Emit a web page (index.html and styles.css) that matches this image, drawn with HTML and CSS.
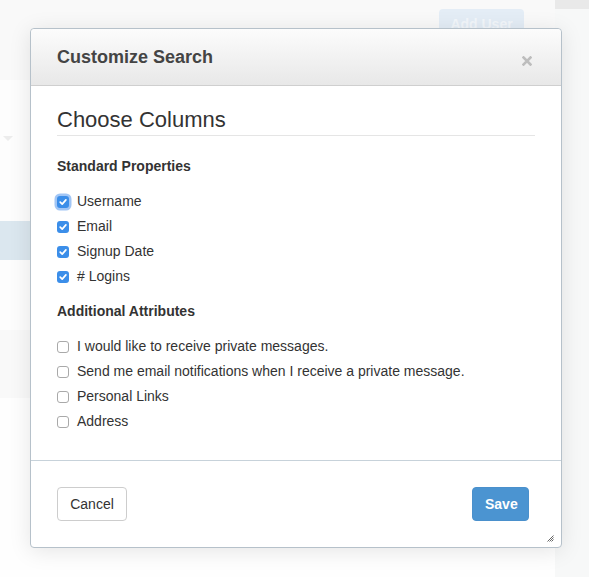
FILE: index.html
```html
<!DOCTYPE html>
<html>
<head>
<meta charset="utf-8">
<link rel="stylesheet" href="styles.css">
</head>
<body>
<div class="page">
  <div class="main">
    <div class="topbar"><span class="add-btn">Add User</span></div>
    <div class="area a1"><span class="caret"></span></div>
    <div class="area sel"></div>
    <div class="area a2"></div>
    <div class="area a3"></div>
    <div class="area a4"></div>
  </div>
  <div class="side"><div class="side-top"></div></div>
</div>

<div class="modal">
  <div class="modal-header">
    <h2 class="modal-title">Customize Search</h2>
    <svg class="close" width="10" height="10" viewBox="0 0 10 10"><path d="M1.5 1.5 L8.5 8.5 M8.5 1.5 L1.5 8.5" stroke="#bdbdbd" stroke-width="2.6" stroke-linecap="square"/></svg>
  </div>
  <div class="modal-body">
    <h3 class="section-title">Choose Columns</h3>
    <h4 class="group-title">Standard Properties</h4>
    <ul class="opts">
      <li class="opt"><span class="cb checked focus"><svg width="12" height="12" viewBox="0 0 12 12"><path d="M3.2 6.2 L5.2 8.1 L8.9 3.9" fill="none" stroke="#fff" stroke-width="1.7" stroke-linecap="round" stroke-linejoin="round"/></svg></span>Username</li>
      <li class="opt"><span class="cb checked"><svg width="12" height="12" viewBox="0 0 12 12"><path d="M3.2 6.2 L5.2 8.1 L8.9 3.9" fill="none" stroke="#fff" stroke-width="1.7" stroke-linecap="round" stroke-linejoin="round"/></svg></span>Email</li>
      <li class="opt"><span class="cb checked"><svg width="12" height="12" viewBox="0 0 12 12"><path d="M3.2 6.2 L5.2 8.1 L8.9 3.9" fill="none" stroke="#fff" stroke-width="1.7" stroke-linecap="round" stroke-linejoin="round"/></svg></span>Signup Date</li>
      <li class="opt"><span class="cb checked"><svg width="12" height="12" viewBox="0 0 12 12"><path d="M3.2 6.2 L5.2 8.1 L8.9 3.9" fill="none" stroke="#fff" stroke-width="1.7" stroke-linecap="round" stroke-linejoin="round"/></svg></span># Logins</li>
    </ul>
    <h4 class="group-title">Additional Attributes</h4>
    <ul class="opts">
      <li class="opt"><span class="cb"></span>I would like to receive private messages.</li>
      <li class="opt"><span class="cb"></span>Send me email notifications when I receive a private message.</li>
      <li class="opt"><span class="cb"></span>Personal Links</li>
      <li class="opt"><span class="cb"></span>Address</li>
    </ul>
  </div>
  <div class="modal-footer">
    <button class="btn btn-default">Cancel</button>
    <button class="btn btn-primary">Save</button>
    <svg class="grip" width="7" height="7" viewBox="0 0 7 7"><path d="M0.5 6.5 L6.5 0.5 M2.5 6.5 L6.5 2.5 M4.5 6.5 L6.5 4.5" stroke="#555" stroke-width="0.9"/></svg>
  </div>
</div>
</body>
</html>
```
FILE: styles.css
```css
* { box-sizing: border-box; }
html, body { margin: 0; padding: 0; }
body {
  font-family: "Liberation Sans", Arial, sans-serif;
  font-size: 14px;
  color: #333;
  background: #fdfdfd;
  width: 589px;
  height: 577px;
  overflow: hidden;
  position: relative;
}
.page { display: flex; height: 577px; }
.main { width: 555px; display: flex; flex-direction: column; }
.topbar {
  height: 80px;
  background: #f9f9f9;
  display: flex;
  justify-content: flex-end;
  align-items: flex-start;
  padding: 9px 31px 0 0;
}
.add-btn {
  display: block;
  width: 85px;
  height: 34px;
  border-radius: 4px;
  background: #e4edf6;
  color: #f3f7fb;
  font-weight: bold;
  text-align: center;
  line-height: 30px;
}
.area { position: relative; }
.a1 { height: 141px; background: #fdfdfd; }
.caret {
  position: absolute;
  left: 3px;
  top: 56px;
  width: 0; height: 0;
  border-left: 5px solid transparent;
  border-right: 5px solid transparent;
  border-top: 5px solid #ececec;
}
.sel { height: 39px; background: #dbe7ef; }
.a2 { height: 70px; background: #fdfdfd; }
.a3 { height: 68px; background: #f9f9f9; }
.a4 { flex: 1; background: #fefefe; }
.side { flex: 1; background: #f7f8f8; }
.side-top { height: 9px; background: #e9e9e9; }

.modal {
  position: absolute;
  left: 30px;
  top: 28px;
  width: 532px;
  height: 520px;
  background: #fff;
  border: 1px solid #b6c1ca;
  border-radius: 4px;
  box-shadow: 0 3px 22px rgba(0,0,0,0.10);
  display: flex;
  flex-direction: column;
}
.modal-header {
  height: 57px;
  padding: 1px 26px 0;
  display: flex;
  align-items: center;
  justify-content: space-between;
  background: linear-gradient(#fcfcfc, #e8e8e8);
  border-bottom: 1px solid #cfcfcf;
  border-radius: 4px 4px 0 0;
}
.modal-title {
  margin: 0;
  font-size: 18px;
  line-height: 55px;
  font-weight: bold;
  color: #444;
}
.close { margin: 6px 3px 0 0; }
.modal-body {
  flex: 1;
  padding: 21px 26px 0 26px;
}
.section-title {
  margin: 0;
  font-size: 22px;
  line-height: 26px;
  font-weight: normal;
  color: #333;
  padding-bottom: 2px;
  border-bottom: 1px solid #e5e5e5;
}
.group-title {
  margin: 20px 0 15px;
  font-size: 14px;
  line-height: 20px;
  font-weight: bold;
  color: #333;
}
.opts + .group-title { margin-top: 15px; }
.opts {
  list-style: none;
  margin: 0;
  padding: 0;
  display: flex;
  flex-direction: column;
  gap: 5px;
}
.opt {
  display: flex;
  align-items: center;
  height: 20px;
  line-height: 20px;
  color: #333;
}
.cb {
  width: 12px;
  height: 12px;
  border-radius: 3px;
  border: 1px solid #a9a9a9;
  background: #fff;
  margin: 1px 8px 0 0;
  flex: none;
  display: flex;
}
.cb.checked {
  border: none;
  background: #3b8ee9;
}
.cb svg { display: block; }
.cb.focus { box-shadow: 0 0 0 2.5px rgba(86,152,236,0.55); }
.modal-footer {
  height: 87px;
  flex: none;
  border-top: 1px solid #c7d2da;
  padding: 26px 32px 26px 26px;
  display: flex;
  justify-content: space-between;
  align-items: flex-start;
  position: relative;
}
.btn {
  font-family: "Liberation Sans", Arial, sans-serif;
  font-size: 14px;
  height: 34px;
  padding: 0 12px;
  border-radius: 4px;
  line-height: 32px;
  margin: 0;
}
.btn-default {
  width: 70px;
  background: #fff;
  border: 1px solid #cdcdcd;
  color: #333;
}
.btn-primary {
  width: 57px;
  background: #4b94d1;
  border: 1px solid #4a90cc;
  color: #fff;
  font-weight: bold;
}
.grip {
  position: absolute;
  right: 7px;
  bottom: 5px;
}
```
